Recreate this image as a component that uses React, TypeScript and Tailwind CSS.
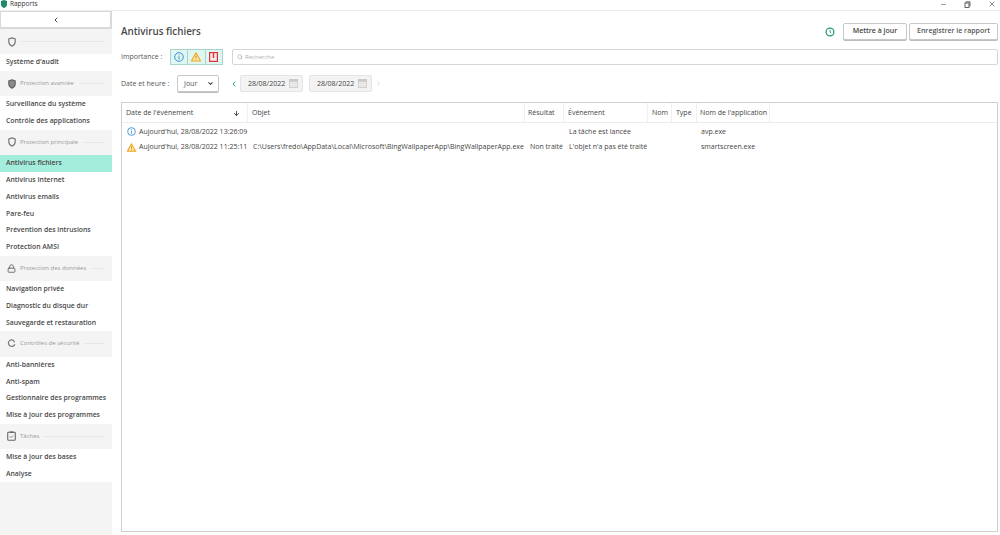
import type { ReactNode } from "react";
import { ChevronLeft, ChevronRight, Minus, X, Search, Lock, ArrowDown, ChevronDown } from "lucide-react";

const cx = (...parts: (string | false | undefined)[]): string => parts.filter(Boolean).join(" ");

type Item = { label: string; active?: boolean };
type Section = { title?: string; icon: ReactNode; items: Item[] };

function ShieldIcon({ fill }: { fill?: boolean }) {
  return (
    <svg width="8" height="10" viewBox="0 0 10 12" fill="none">
      <path d="M5 .8 9 2.200v3.600c0 2.800-1.800 4.500-4 5.400C2.800 10.300 1 8.600 1 5.800V2.200Z" fill={fill ? "#8a8a8a" : "none"} stroke={fill ? "#666" : "#777"} strokeWidth="1.500" />
    </svg>
  );
}

function RingIcon() {
  return (
    <svg width="9" height="9" viewBox="0 0 11 11" fill="none">
      <path d="M8.500 2.200A4 4 0 1 0 9.500 6.500" stroke="#777" strokeWidth="1.500" />
      <circle cx="8.800" cy="3.400" r="1" fill="#777" />
    </svg>
  );
}

function TaskIcon() {
  return (
    <svg width="9" height="10" viewBox="0 0 10 11" fill="none">
      <rect x=".8" y="1.300" width="8.400" height="9" rx="1" stroke="#666" strokeWidth="1.200" />
      <path d="M3 1.300h4" stroke="#666" strokeWidth="1.800" />
      <path d="m3.200 6 1.300 1.300 2.200-2.300" stroke="#666" strokeWidth=".9" />
    </svg>
  );
}

const sections: Section[] = [
  { icon: <ShieldIcon />, items: [{ label: "Système d'audit" }] },
  { title: "Protection avancée", icon: <ShieldIcon fill />, items: [{ label: "Surveillance du système" }, { label: "Contrôle des applications" }] },
  {
    title: "Protection principale",
    icon: <ShieldIcon />,
    items: [
      { label: "Antivirus fichiers", active: true },
      { label: "Antivirus Internet" },
      { label: "Antivirus emails" },
      { label: "Pare-feu" },
      { label: "Prévention des intrusions" },
      { label: "Protection AMSI" },
    ],
  },
  {
    title: "Protection des données",
    icon: <Lock size={9} strokeWidth={2.400} color="#666" />,
    items: [{ label: "Navigation privée" }, { label: "Diagnostic du disque dur" }, { label: "Sauvegarde et restauration" }],
  },
  {
    title: "Contrôles de sécurité",
    icon: <RingIcon />,
    items: [{ label: "Anti-bannières" }, { label: "Anti-spam" }, { label: "Gestionnaire des programmes" }, { label: "Mise à jour des programmes" }],
  },
  { title: "Tâches", icon: <TaskIcon />, items: [{ label: "Mise à jour des bases" }, { label: "Analyse" }] },
];

function InfoIcon({ size = 9 }: { size?: number }) {
  return (
    <svg width={size} height={size} viewBox="0 0 10 10" fill="none">
      <circle cx="5" cy="5" r="4.300" stroke="#3f8fd6" strokeWidth="1" />
      <path d="M5 2.500v.8M5 4.200v3.200" stroke="#3f8fd6" strokeWidth="1" />
    </svg>
  );
}

function WarnIcon({ size = 9 }: { size?: number }) {
  return (
    <svg width={size} height={size} viewBox="0 0 10 10" fill="none">
      <path d="M5 1 9.500 9H.5Z" fill="#ffedb8" stroke="#f2a516" strokeWidth="1.200" />
      <path d="M5 3.800v2.600M5 7v.8" stroke="#a8740c" strokeWidth=".8" />
    </svg>
  );
}

function CriticalIcon() {
  return (
    <svg width="9" height="10" viewBox="0 0 9 10" fill="none">
      <rect x=".6" y=".6" width="7.800" height="8.800" stroke="#d9363e" strokeWidth="1.200" fill="#fde8e8" />
      <path d="M4.500 1v5" stroke="#d9363e" strokeWidth="1.400" />
    </svg>
  );
}

function CalendarIcon() {
  return (
    <svg width="9" height="9" viewBox="0 0 9 9">
      <rect width="9" height="9" fill="#c9c9c9" />
      <path d="M1 3h7v5H1ZM4.500 3v5M1 5.500h7" fill="#e3e3e3" stroke="#f2f2f2" strokeWidth=".5" />
    </svg>
  );
}

function DateField({ value }: { value: string }) {
  return (
    <div className="flex h-[17px] w-[63px] items-center justify-between rounded-[2px] border border-[#e4e4e4] bg-[#f3f3f3] pl-[7px] pr-[4px] text-[7px] text-[#444]">
      <span className="pt-[2px]">{value}</span>
      <CalendarIcon />
    </div>
  );
}

const columns = [
  { label: "Date de l'événement", w: "w-[126px]", sort: true },
  { label: "Objet", w: "w-[277px]" },
  { label: "Résultat", w: "w-[39px] !pl-[3px]" },
  { label: "Événement", w: "w-[84px]" },
  { label: "Nom", w: "w-[24px]" },
  { label: "Type", w: "w-[25px]" },
  { label: "Nom de l'application", w: "w-[73px] !pl-[3px]" },
];

function Row({ icon, date, object, result, event, app }: { icon: ReactNode; date: string; object?: string; result?: string; event: string; app: string }) {
  return (
    <div className="flex h-[15.500px] items-center whitespace-nowrap text-[7px] text-[#444]">
      <div className="flex w-[126px] items-center gap-[3px] pl-[5px]">
        {icon}
        <span>{date}</span>
      </div>
      <div className="w-[277px] overflow-hidden pl-[5px]">{object}</div>
      <div className="w-[39px] pl-[5px]">{result}</div>
      <div className="w-[84px] pl-[5px]">{event}</div>
      <div className="w-[49px]" />
      <div className="pl-[4px]">{app}</div>
    </div>
  );
}

export default function App() {
  return (
    <div className="flex h-[535px] w-[1000px] flex-col overflow-hidden bg-white font-['Open_Sans',sans-serif]">
      <header className="flex h-[11px] shrink-0 items-center justify-between border-b border-[#ececec] pb-[2px]">
        <div className="flex items-center gap-[3px] pl-[1px] text-[6.500px] text-[#333]">
          <svg width="6" height="8" viewBox="0 0 6 8">
            <path d="M3 0 6 1v3.500C6 6.500 4.500 7.500 3 8 1.500 7.500 0 6.500 0 4.500V1Z" fill="#1d8a6a" />
          </svg>
          Rapports
        </div>
        <div className="flex items-center gap-[17px] pr-[4px] text-[#555]">
          <Minus size={7} />
          <svg width="7" height="7" viewBox="0 0 7 7" fill="none" stroke="#555" strokeWidth=".9">
            <rect x="1" y="2" width="4" height="4.500" />
            <path d="M2.200 2V.8h3.800v4.200H5" />
          </svg>
          <X size={8} />
        </div>
      </header>

      <div className="flex min-h-0 flex-1">
        <aside className="flex w-[112px] shrink-0 flex-col bg-[#f4f4f4]">
          <div className="flex h-[18px] shrink-0 items-center justify-center border border-b-2 border-r-2 border-[#d9d9d9] bg-white">
            <ChevronLeft size={8} strokeWidth={3} color="#444" />
          </div>
          {sections.map((section, i) => (
            <div key={i}>
              <div className="flex h-[25.200px] items-center pl-[7px] pr-[8px]">
                <span className="flex w-[9px] shrink-0 justify-center">{section.icon}</span>
                {section.title && <span className="ml-[4px] whitespace-nowrap text-[6px] text-[#999]">{section.title}</span>}
                <span className="ml-[5px] h-px flex-1 bg-[#e6e6e6]" />
              </div>
              <div className="bg-white">
                {section.items.map((item) => (
                  <div
                    key={item.label}
                    className={cx(
                      "flex h-[16.800px] items-center whitespace-nowrap pl-[6px] text-[6.850px] font-semibold text-[#484848]",
                      item.active && "bg-[#a4ecdc]",
                    )}
                  >
                    {item.label}
                  </div>
                ))}
              </div>
            </div>
          ))}
        </aside>

        <main className="flex min-w-0 flex-1 flex-col pl-[9px] pr-[2px] pb-[3px]">
          <div className="flex h-[29px] shrink-0 items-end justify-between">
            <h1 className="text-[9.800px] font-semibold leading-[16px] text-[#4a4a4a]">Antivirus fichiers</h1>
            <div className="flex items-center gap-[2px]">
              <svg className="mr-[6px] mt-[1px]" width="10" height="10" viewBox="0 0 10 10" fill="none">
                <circle cx="5" cy="5" r="3.900" stroke="#2b9a78" strokeWidth="1.300" />
                <path d="M5 2.800V5l1.300 1" stroke="#2b9a78" strokeWidth=".9" />
              </svg>
              <button className="h-[17px] w-[64px] rounded-[2px] border border-[#c8c8c8] bg-white text-[7px] font-semibold text-[#444] shadow-[0_1px_0_#bbb]">Mettre à jour</button>
              <button className="h-[17px] w-[89px] rounded-[2px] border border-[#c8c8c8] bg-white text-[7px] font-semibold text-[#555] shadow-[0_1px_0_#bbb]">Enregistrer le rapport</button>
            </div>
          </div>

          <div className="mt-[9px] flex h-[16px] shrink-0 items-center">
            <span className="w-[49px] text-[7px] text-[#555]">Importance :</span>
            <div className="flex h-[16px] w-[53px] border border-[#a8d4cc] bg-[#dff6f1]">
              <div className="flex flex-1 items-center justify-center border-r border-[#a8d4cc]">
                <InfoIcon size={10} />
              </div>
              <div className="flex flex-1 items-center justify-center border-r border-[#a8d4cc]">
                <WarnIcon size={10} />
              </div>
              <div className="flex flex-1 items-center justify-center">
                <CriticalIcon />
              </div>
            </div>
            <div className="ml-[9px] flex h-[16px] flex-1 items-center gap-[2px] rounded-[2px] border border-[#d6d6d6] pl-[4px] text-[6px] text-[#b0b0b0]">
              <Search size={6} strokeWidth={2.500} color="#aaa" />
              Recherche
            </div>
          </div>

          <div className="mt-[10px] flex h-[17px] shrink-0 items-center">
            <span className="w-[56px] pt-[2px] text-[7px] text-[#555]">Date et heure :</span>
            <div className="flex h-[17px] w-[42px] items-center justify-between rounded-[2px] border border-[#c8c8c8] pl-[6px] pr-[4px] text-[7px] text-[#555] shadow-[0_1px_0_#bbb]">
              <span className="pt-[2px]">Jour</span>
              <ChevronDown size={7} strokeWidth={3.500} color="#444" />
            </div>
            <ChevronLeft className="ml-[11px]" size={8} strokeWidth={3} color="#2b9a78" />
            <span className="ml-[2px]">
              <DateField value="28/08/2022" />
            </span>
            <span className="ml-[6px]">
              <DateField value="28/08/2022" />
            </span>
            <ChevronRight className="ml-[3px]" size={7} strokeWidth={2} color="#bbb" />
          </div>

          <div className="mt-[10px] flex min-h-0 flex-1 flex-col border border-[#cfcfcf]">
            <div className="flex h-[20px] shrink-0 border-b border-[#ececec] text-[7px] text-[#444]">
              {columns.map((col) => (
                <div key={col.label} className={cx("flex items-center justify-between whitespace-nowrap border-r border-[#f0f0f0] pl-[4px] pr-[7px] pt-[2px]", col.w)}>
                  {col.label}
                  {col.sort && <ArrowDown size={7} strokeWidth={3} color="#333" />}
                </div>
              ))}
            </div>
            <div className="pt-[1px]">
              <Row icon={<InfoIcon />} date="Aujourd'hui, 28/08/2022 13:26:09" event="La tâche est lancée" app="avp.exe" />
              <Row
                icon={<WarnIcon />}
                date="Aujourd'hui, 28/08/2022 11:25:11"
                object="C:\Users\fredo\AppData\Local\Microsoft\BingWallpaperApp\BingWallpaperApp.exe"
                result="Non traité"
                event="L'objet n'a pas été traité"
                app="smartscreen.exe"
              />
            </div>
          </div>
        </main>
      </div>
    </div>
  );
}
